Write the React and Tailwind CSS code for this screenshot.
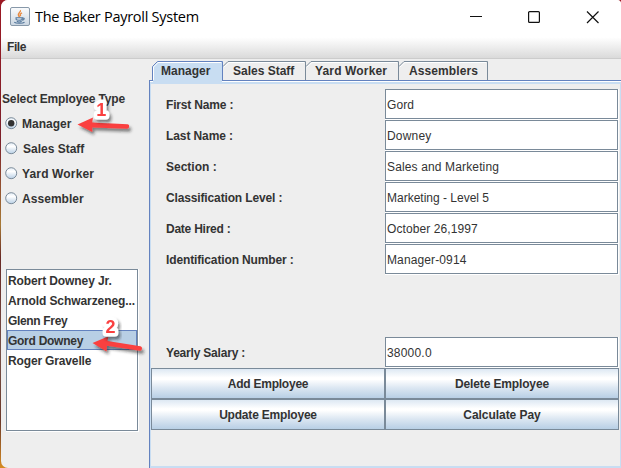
import React from "react";

const FIELDS = [
  ["First Name :", "Gord", "tracking-[-0.17px]", "tracking-[0.1px]"],
  ["Last Name :", "Downey", "tracking-[-0.1px]", "tracking-[0.2px]"],
  ["Section :", "Sales and Marketing", "tracking-[0px]", "tracking-[0.14px]"],
  ["Classification Level :", "Marketing - Level 5", "tracking-[-0.14px]", "tracking-[0px]"],
  ["Date Hired :", "October 26,1997", "tracking-[-0.24px]", "tracking-[0.1px]"],
  ["Identification Number :", "Manager-0914", "tracking-[-0.13px]", "tracking-[0.12px]"],
  null,
  null,
  ["Yearly Salary :", "38000.0", "tracking-[-0.2px]", "tracking-[0.2px]"],
];

const TABS = [
  { name: "Manager", width: 71, active: true, text: "left-[9px]" },
  { name: "Sales Staff", width: 83, text: "left-[10px]" },
  { name: "Yard Worker", width: 93, text: "left-[9px] tracking-[0.15px]" },
  { name: "Assemblers", width: 89, text: "left-[10px] tracking-[0.1px]" },
];

const EMPLOYEES = [
  ["Robert Downey Jr.", "tracking-[-0.1px]"],
  ["Arnold Schwarzeneg...", "tracking-[-0.08px]"],
  ["Glenn Frey", "tracking-[-0.33px]"],
  ["Gord Downey", "tracking-[-0.27px]"],
  ["Roger Gravelle", "tracking-[-0.15px]"],
];

function JavaIcon() {
  return (
    <svg width="20" height="19" viewBox="0 0 20 19">
      <defs>
        <linearGradient id="java-bg" x1="0" y1="0" x2="0" y2="1">
          <stop offset="0" stopColor="#fbfcfd" />
          <stop offset="1" stopColor="#c9d5e1" />
        </linearGradient>
      </defs>
      <rect x="0.5" y="0.5" width="19" height="18" rx="1.5" fill="url(#java-bg)" stroke="#8798a9" />
      <path d="M10.3 3.3c1.3 1.6-3.2 3-1.8 5.2.5.8 1 1.2 1 1.7M12 5.8c-2 1-2.3 2-1.2 3.2" fill="none" stroke="#e8893f" strokeWidth="1.4" />
      <path d="M5.5 10.8h7.5M6.1 11v1.3c0 1.2 6 1.2 6 0V11M12.7 11.2c2.2-.4 2 1.8-.6 2M6.8 14.3c1.3.7 3.6.7 4.9 0M4.3 15.3c1.8 1.4 8.6 1.3 10.2 0" fill="none" stroke="#55789c" strokeWidth="1.1" />
    </svg>
  );
}

function Tab({ name, width, active, text }) {
  const edge = active ? "#6382bf" : "#7a8a99";
  return (
    <div className="relative h-[19px]" style={{ width }}>
      <svg className="absolute left-0 top-0" width={width} height="20">
        <path d={`M0.5 20V5.5L5.5 0.5H${width - 0.5}V20Z`} fill={active ? "#c8ddf2" : "#eeeeee"} />
        <path d={active ? `M1.5 20V6L6 1.5H${width - 2}` : `M1 6L6 1.5H${width - 2}`} fill="none" stroke="#fff" />
        <path d={active ? `M0.5 19V5.5L5.5 0.5H${width - 0.5}V19` : `M0 5.5L5 0.5H${width - 0.5}V19`} fill="none" stroke={edge} />
      </svg>
      <span className={`absolute top-[3px] whitespace-nowrap leading-[14px] ${text}`}>{name}</span>
    </div>
  );
}

function Radio({ label, selected, text = "ml-1" }) {
  return (
    <div className="flex h-[25px] items-center">
      <svg width="13" height="13" viewBox="0 0 13 13">
        <defs>
          <linearGradient id="radio-fill" x1="0" y1="0" x2="0" y2="1">
            <stop offset="0" stopColor="#e4edf6" />
            <stop offset="0.35" stopColor="#fff" />
            <stop offset="1" stopColor="#b8cfe5" />
          </linearGradient>
        </defs>
        <circle cx="6.2" cy="6.2" r="5.5" fill="url(#radio-fill)" stroke="#7a8a99" />
        {selected && <circle cx="6.2" cy="6.2" r="3.2" fill="#333" />}
      </svg>
      <span className={text}>{label}</span>
    </div>
  );
}

function Field({ value, tracking }) {
  return (
    <div className="h-[31px] w-[234px] border-b border-r border-white">
      <div className={`flex h-[30px] w-[233px] items-center border border-[#7a8a99] bg-white pl-px pt-px font-normal ${tracking}`}>{value}</div>
    </div>
  );
}

function Button({ children, tracking }) {
  return (
    <button
      className={`h-[31px] w-[234px] border border-[#7a8a99] bg-[linear-gradient(#dde8f3_0%,#ffffff_30%,#ffffff_36%,#dce7f2_65%,#b8cfe5_100%)] font-bold ${tracking}`}
    >
      {children}
    </button>
  );
}

function Callouts() {
  return (
    <svg className="absolute left-0 top-0 h-[468px] w-[621px]" viewBox="0 0 621 468">
      <defs>
        <filter id="shade" x="-20%" y="-40%" width="150%" height="200%">
          <feDropShadow dx="2" dy="3" stdDeviation="1.8" floodColor="#222" floodOpacity="0.55" />
        </filter>
      </defs>
      <g fill="#fa4141" filter="url(#shade)">
        <path d="M77.5 124.5L93 117.5L92.2 122.5L127.5 124.2C130 124.5 129.7 128.7 127 128.7L92.2 127.5L92.3 132Z" />
        <path d="M92.5 343L108.5 336.2L107.5 341L140.5 346.2C143 347 142.2 351 139.8 350.8L107 345.8L106.5 351.5Z" />
      </g>
      <g filter="url(#shade)" fill="#fa4141" stroke="#fff" strokeWidth="7" strokeLinejoin="round" paintOrder="stroke" fontFamily="Liberation Sans, sans-serif" fontWeight="bold">
        <text x="96.2" y="115.5" fontSize="18">1</text>
        <text x="105.5" y="333" fontSize="18">2</text>
      </g>
    </svg>
  );
}

export default function App() {
  return (
    <div className="relative h-[468px] w-[621px] overflow-hidden bg-[linear-gradient(#9c1823_0%,#7c202a_30%,#a77a36_48%,#682925_55%,#765148_75%,#6b3929_90%,#d68b22_100%)] font-['Liberation_Sans',sans-serif] text-[12px] font-bold leading-[14px] text-[#333]">
      <div className="ml-px flex h-[468px] w-[620px] flex-col overflow-hidden rounded-l-[7px] rounded-tr-[4px] bg-[#eee]">
        <header className="flex h-[35px] shrink-0 items-center bg-white pb-[2px] pl-[9px] font-['Open_Sans',sans-serif] font-normal text-black">
          <JavaIcon />
          <span className="ml-[5px] w-[400px] whitespace-nowrap text-[14.5px] leading-5 tracking-[-0.27px]">The Baker Payroll System</span>
          <svg className="ml-[34px]" width="132" height="16" viewBox="0 0 132 16" fill="none" stroke="#111">
            <path d="M1 7.5h12" />
            <rect x="59.6" y="2.6" width="10.8" height="10.8" rx="1" strokeWidth="1.2" />
            <path d="M118 2.5l11.5 11.5M129.5 2.5L118 14" strokeWidth="1.2" />
          </svg>
        </header>
        <nav className="h-[24px] shrink-0 border-b border-[#ccc] bg-[linear-gradient(#fff,#fff_10%,#dadada)] pl-[6px] pt-[5px] tracking-[-0.4px]">File</nav>

        <div className="flex h-[409px]">
          <aside className="w-[148px]">
            <h2 className="mt-[33px] whitespace-nowrap pl-px tracking-[-0.14px]">Select Employee Type</h2>
            <div className="mt-[5px] pl-1">
              <Radio label="Manager" selected />
              <Radio label="Sales Staff" text="ml-[5px]" />
              <Radio label="Yard Worker" text="ml-1 tracking-[0.15px]" />
              <Radio label="Assembler" text="ml-1 tracking-[0.05px]" />
            </div>
            <div className="ml-[5px] mt-[58px] h-[163px] w-[133px] border-b border-r border-white">
              <ul className="h-[162px] w-[132px] border border-[#7a8a99] bg-white">
                {EMPLOYEES.map(([name, tracking]) => (
                  <li
                    key={name}
                    className={`flex h-5 items-center whitespace-nowrap border pt-[2px] ${tracking} ${name === "Gord Downey" ? "border-[#6382bf] bg-[#b8cfe5]" : "border-transparent"}`}
                  >
                    {name}
                  </li>
                ))}
              </ul>
            </div>
          </aside>

          <main className="w-[472px] pt-[2px]">
            <div className="flex pl-[3px]">
              {TABS.map((tab) => (
                <Tab key={tab.name} {...tab} />
              ))}
            </div>
            <section className="relative h-[388px] border-l border-t border-[#6382bf]">
              <div className="absolute -top-px left-[3px] h-[2px] w-[69px] bg-[#c8ddf2]" />
              <div className="h-[387px] border-t border-white">
                <div className="h-[386px] border-b-2 border-l border-r border-t-2 border-[#c8ddf2] pt-[5px]">
                  {FIELDS.map((row, i) => (
                    <div key={i} className="flex h-[31px]">
                      {row && (
                        <>
                          <span className={`flex w-[234px] items-center pl-[15px] ${row[2]}`}>{row[0]}</span>
                          <Field value={row[1]} tracking={row[3]} />
                        </>
                      )}
                    </div>
                  ))}
                  <div className="grid w-[468px] grid-cols-2">
                    <Button tracking="tracking-[-0.23px]">Add Employee</Button>
                    <Button tracking="tracking-[-0.14px]">Delete Employee</Button>
                    <Button tracking="tracking-[-0.2px]">Update Employee</Button>
                    <Button tracking="tracking-[-0.05px]">Calculate Pay</Button>
                  </div>
                </div>
              </div>
            </section>
          </main>
        </div>
      </div>
      <Callouts />
    </div>
  );
}
